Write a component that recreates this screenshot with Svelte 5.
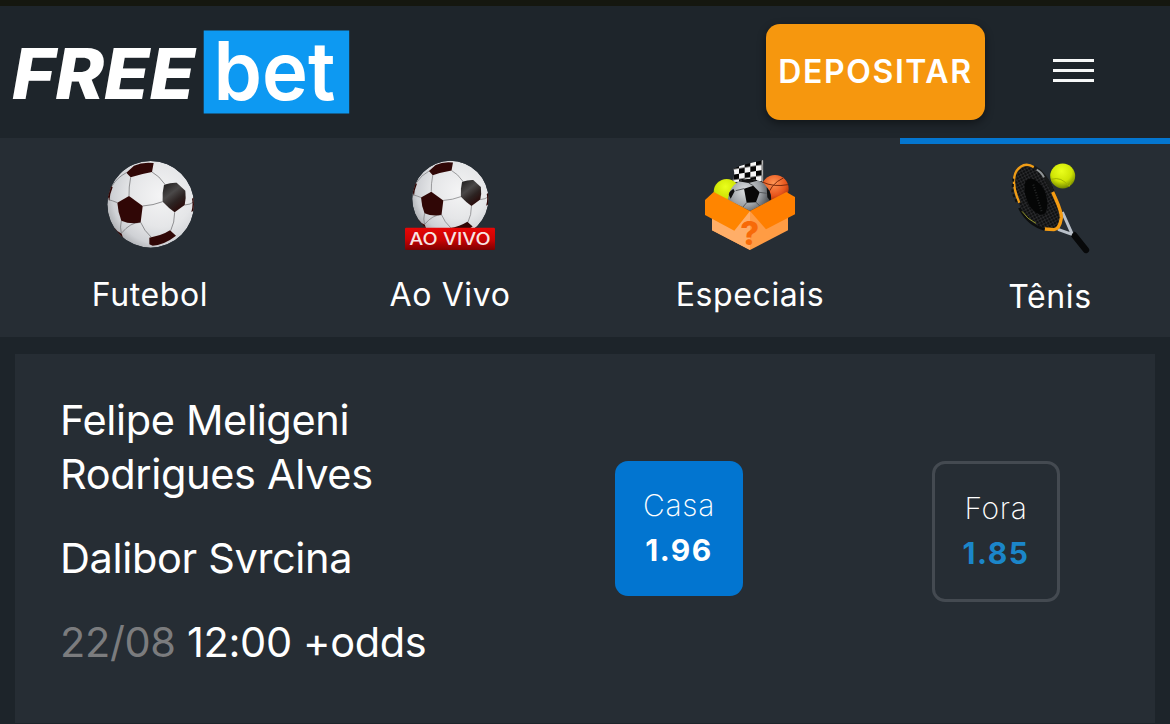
<script lang="ts">
  type Icon = 'ball' | 'live' | 'box' | 'racket';

  interface Sport {
    id: Icon;
    label: string;
  }

  const sports: Sport[] = [
    { id: 'ball', label: 'Futebol' },
    { id: 'live', label: 'Ao Vivo' },
    { id: 'box', label: 'Especiais' },
    { id: 'racket', label: 'Tênis' }
  ];

  const odds = [
    { label: 'Casa', value: '1.96' },
    { label: 'Fora', value: '1.85' }
  ];

  let active = $state<Icon>('racket');
  let picked = $state('Casa');
</script>

{#snippet ball()}
  <g clip-path="url(#ball-clip)">
    <circle cx="212" cy="163" r="130" fill="url(#ball-fill)" />
    <g fill="none" stroke="#7d7d80" stroke-width="2.500">
      <path d="M152 82Q146 112 147 138M216 66Q238 78 254 102M188 168Q220 166 248 155M182 217Q192 242 214 262" />
      <path d="M82 148Q98 152 112 158M124 212Q119 232 124 250M314 165Q332 164 342 155M284 187Q284 218 272 242" />
      <path d="M139 68Q112 82 96 108M182 217Q152 216 124 250" />
    </g>
    <g fill="#300706">
      <path d="M139 68L162 47Q188 35 221 39L216 66Q182 72 152 82Z" />
      <path d="M112 158L147 138L188 168L182 217Q152 224 124 212Q114 188 112 158Z" />
      <path d="M208 263Q245 257 270 241L288 257Q254 284 218 287L208 283Z" />
      <path d="M82 136L92 106L98 112Q90 130 88 152ZM96 232L104 234Q112 246 125 251L130 266Z" />
      <path d="M336 146L344 140V180L334 186Q340 166 336 146Z" />
    </g>
    <path d="M252 104Q274 97 290 98L316 122Q319 145 314 165L284 187Q266 174 248 155Q246 128 252 104Z" fill="url(#patch)" />
  </g>
{/snippet}

<svg class="defs" width="0" height="0" aria-hidden="true">
  <defs>
    <radialGradient id="ball-fill" cx="0.62" cy="0.4" r="0.66">
      <stop offset="0" stop-color="#f4f4f5" />
      <stop offset="0.55" stop-color="#e5e6e8" />
      <stop offset="0.85" stop-color="#cfd1d5" />
      <stop offset="1" stop-color="#aeb0b4" />
    </radialGradient>
    <linearGradient id="patch" x1="0.2" y1="0.1" x2="0.75" y2="1">
      <stop offset="0" stop-color="#2c2a2a" />
      <stop offset="0.3" stop-color="#4a4848" />
      <stop offset="0.6" stop-color="#2c2322" />
      <stop offset="1" stop-color="#2a0504" />
    </linearGradient>
    <linearGradient id="live-red" x2="0" y2="1">
      <stop offset="0" stop-color="#e80606" />
      <stop offset="0.55" stop-color="#c90303" />
      <stop offset="1" stop-color="#7d0000" />
    </linearGradient>
    <radialGradient id="tennis" cx="0.45" cy="0.3" r="0.7">
      <stop offset="0" stop-color="#eaff1c" />
      <stop offset="0.6" stop-color="#cfe405" />
      <stop offset="1" stop-color="#718500" />
    </radialGradient>
    <radialGradient id="basket" cx="0.45" cy="0.3" r="0.75">
      <stop offset="0" stop-color="#ff9554" />
      <stop offset="0.6" stop-color="#e8551c" />
      <stop offset="1" stop-color="#8e2706" />
    </radialGradient>
    <radialGradient id="grey-ball" cx="0.4" cy="0.3" r="0.7">
      <stop offset="0" stop-color="#dfe2e4" />
      <stop offset="0.5" stop-color="#9da1a5" />
      <stop offset="1" stop-color="#25282b" />
    </radialGradient>
    <clipPath id="ball-clip"><circle cx="212" cy="163" r="130" /></clipPath>
    <clipPath id="flag-clip"><path d="M190 56Q222 42 279 31V94L184 96Q198 76 190 56Z" /></clipPath>
    <clipPath id="small-clip"><path d="M174 148A65 62 0 0 1 304 148L296 155L240 183L178 152Z" /></clipPath>
    <pattern id="check" x="190" y="38" width="34" height="32" patternUnits="userSpaceOnUse" patternTransform="skewY(-9) translate(0 34)">
      <rect width="34" height="32" fill="#f6f6f6" />
      <path d="M0 0H17V16H0ZM17 16H34V32H17Z" fill="#050505" />
    </pattern>
    <pattern id="strings" width="9" height="9" patternUnits="userSpaceOnUse" patternTransform="rotate(-28)">
      <rect width="9" height="9" fill="#0e0f10" />
      <path d="M0 0H9M0 0V9" stroke="#4a4c4d" stroke-width="2" />
    </pattern>
  </defs>
</svg>

<div class="page">
  <header>
    <a class="logo" href="#home" aria-label="FREE bet">
      <svg width="340" height="86" viewBox="10 29 340 86">
        <rect x="203.700" y="30.500" width="145.500" height="83" fill="#0d99f2" />
        <text class="free" x="12" y="98.500" textLength="183" lengthAdjust="spacingAndGlyphs">FREE</text>
        <text class="bet" x="213.500" y="100" textLength="122" lengthAdjust="spacingAndGlyphs">bet</text>
      </svg>
    </a>
    <button class="deposit">DEPOSITAR</button>
    <button class="menu" aria-label="Menu">
      <span></span>
      <span></span>
      <span></span>
    </button>
  </header>

  <nav>
    {#each sports as sport (sport.id)}
      <button class="sport" class:active={active === sport.id} onclick={() => (active = sport.id)}>
        {#if sport.id === 'ball'}
          <svg viewBox="75 30 270 270">{@render ball()}</svg>
        {:else if sport.id === 'live'}
          <svg viewBox="75 30 270 270">
            <g transform="translate(24.500 3.500) scale(0.88)">{@render ball()}</g>
            <rect x="75" y="233" width="270" height="67" rx="4" fill="url(#live-red)" />
            <text class="live" x="88" y="286" textLength="244" lengthAdjust="spacingAndGlyphs">AO VIVO</text>
          </svg>
        {:else if sport.id === 'box'}
          <svg viewBox="105 30 270 270">
            <path d="M131 128L240 183L352 128L330 100H150Z" fill="#111" />
            <rect x="180" y="28" width="100" height="70" fill="url(#check)" clip-path="url(#flag-clip)" />
            <path d="M278 31V96" stroke="#aaa" stroke-width="3" />
            <circle cx="170" cy="126" r="39" fill="url(#tennis)" />
            <circle cx="315" cy="116" r="41" fill="url(#basket)" />
            <path d="M277 96Q310 112 354 104M340 84Q300 102 290 146" fill="none" stroke="#7b2a0c" stroke-width="3" />
            <g clip-path="url(#small-clip)">
              <circle cx="239" cy="148" r="65" fill="url(#grey-ball)" />
              <path d="M222 116L250 107L269 127L258 157L230 158Z" fill="#080808" />
              <path d="M205 94L222 84H258L262 92L236 99ZM174 130L190 116L194 124L182 146ZM290 112L306 130V160L292 142ZM204 168L218 172L230 192H190Z" fill="#111" />
              <path d="M236 99L250 107M197 122L222 116M230 158L218 172M258 157L272 170M269 127L290 130" stroke="#55585b" stroke-width="3" />
            </g>
            <path d="M126 190L240 184L354 190V241L240 300L126 241Z" fill="#ff9c44" />
            <path d="M240 184V300L126 241V190Z" fill="#ffae68" />
            <path d="M131 126L240 183L193 242L105 195V150Z" fill="#ff8500" />
            <path d="M349 126L240 183L288 238L375 193V141Z" fill="#ff7f00" />
            <text class="question" x="239" y="284">?</text>
          </svg>
        {:else}
          <svg viewBox="45 42 270 270">
            <path d="M252 255L288 300" stroke="#08090a" stroke-width="19" stroke-linecap="round" />
            <path d="M217 186L246 251M204 238L246 253" stroke="#b9c0c9" stroke-width="9" fill="none" />
            <path d="M74 92C68 60 92 42 126 49C158 56 190 100 203 150C212 190 214 238 196 240C156 244 118 214 94 178C80 154 76 124 74 92Z" fill="url(#strings)" />
            <path d="M104 106C106 82 128 80 148 100C170 122 178 164 168 186C158 206 126 186 114 158C106 140 102 124 104 106Z" fill="#050606" />
            <path d="M88 158C70 118 62 70 92 50C104 42 120 44 132 52" fill="none" stroke="#ef9c16" stroke-width="7" />
            <path d="M132 51C160 66 178 98 188 126" fill="none" stroke="#181a1a" stroke-width="10" />
            <path d="M140 59Q154 66 162 82" fill="none" stroke="#8f9496" stroke-width="6" />
            <path d="M188 126C202 158 216 184 214 204C211 224 204 238 192 239L164 237" fill="none" stroke="#f59c12" stroke-width="10" />
            <path d="M88 174C106 208 132 230 164 238" fill="none" stroke="#0c0e0e" stroke-width="8" />
            <path d="M96 184Q112 208 138 220" fill="none" stroke="#919329" stroke-width="3" />
            <path d="M70 86L67 128L80 156" fill="none" stroke="#101212" stroke-width="6" stroke-dasharray="9 7" />
            <path d="M130 104L156 188" stroke="#242626" stroke-width="6" stroke-dasharray="3 5" />
            <circle cx="218" cy="78" r="37.500" fill="url(#tennis)" />
            <path d="M184 88Q214 78 238 110M253 87Q240 94 238 108" fill="none" stroke="#a3b500" stroke-width="3" />
          </svg>
        {/if}
        <span>{sport.label}</span>
      </button>
    {/each}
  </nav>

  <main>
    <article class="match">
      <div class="info">
        <p>Felipe Meligeni Rodrigues Alves</p>
        <p>Dalibor Svrcina</p>
        <p class="when"><time>22/08</time> 12:00 +odds</p>
      </div>
      <div class="odds">
        {#each odds as odd (odd.label)}
          <button class="odd" class:picked={picked === odd.label} onclick={() => (picked = odd.label)}>
            <span>{odd.label}</span>
            <strong>{odd.value}</strong>
          </button>
        {/each}
      </div>
    </article>
  </main>
</div>

<style>
  :global(body) {
    background: #1d242a;
  }
  .defs {
    position: absolute;
  }
  .page {
    height: 724px;
    overflow: hidden;
    box-sizing: border-box;
    border-top: 6px solid #15170f;
    background: #1d242a;
    color: #fff;
    font-family: Inter, 'Liberation Sans', sans-serif;
  }
  button {
    border: none;
    padding: 0;
    color: inherit;
    font: inherit;
    background: none;
  }
  header {
    display: flex;
    align-items: center;
    height: 132px;
    padding: 0 76px 0 10px;
    box-sizing: border-box;
    background: #1e252b;
  }
  .logo {
    display: flex;
    margin-right: auto;
  }
  .logo svg,
  .sport svg {
    overflow: visible;
  }
  .free,
  .bet {
    fill: #fff;
    font-family: Inter, sans-serif;
  }
  .free {
    font-size: 70px;
    font-style: italic;
    font-weight: 800;
  }
  .bet {
    font-size: 81px;
    font-weight: 600;
  }
  .deposit {
    width: 219px;
    height: 96px;
    padding-bottom: 2px;
    border-radius: 14px;
    background: #f6970e;
    box-shadow: 0 3px 9px rgba(0, 0, 0, 0.45);
    font-size: 32px;
    font-weight: 600;
    letter-spacing: 1.6px;
  }
  .menu {
    display: flex;
    flex-direction: column;
    gap: 7px;
    width: 41px;
    margin: 0 0 4px 68px;
  }
  .menu span {
    height: 3px;
    background: #f6f8f8;
  }
  nav {
    display: flex;
    height: 199px;
    overflow: hidden;
    background: #262d34;
  }
  .sport {
    flex: 0 0 300px;
    display: flex;
    flex-direction: column;
    align-items: center;
    gap: 25px;
    box-sizing: border-box;
    padding-top: 22px;
    font-size: 32px;
    line-height: 40px;
    letter-spacing: 0.6px;
  }
  .sport.active {
    gap: 23px;
    border-top: 6px solid #0476d0;
    padding-top: 20px;
  }
  .sport svg {
    width: 90px;
    height: 90px;
  }
  .live {
    fill: #f7e4e4;
    font-size: 50px;
    font-weight: 500;
    letter-spacing: 0;
  }
  .question {
    fill: #f76a08;
    font-size: 98px;
    font-weight: 800;
    letter-spacing: 0;
    text-anchor: middle;
  }
  main {
    padding: 17px 15px 0;
  }
  .match {
    display: flex;
    height: 369px;
    box-sizing: border-box;
    padding: 39px 95px 0 45px;
    background: #262d34;
  }
  .info {
    width: 400px;
    font-size: 41.500px;
    line-height: 54px;
    letter-spacing: -0.35px;
  }
  .info p {
    margin: 0 0 30px;
    width: 340px;
  }
  .info .when {
    width: auto;
    white-space: nowrap;
  }
  time {
    color: #7b7c7e;
  }
  .odds {
    flex: 1;
    display: flex;
    justify-content: space-between;
    align-items: flex-start;
    margin: 68px 0 0 155px;
  }
  .odd {
    display: flex;
    flex-direction: column;
    width: 128px;
    box-sizing: border-box;
    border: 3px solid #444a51;
    border-radius: 13px;
    padding: 22px 0 23px;
    font-size: 30px;
    font-weight: 200;
    line-height: 45px;
    letter-spacing: 0.7px;
    text-align: center;
  }
  .odd strong {
    color: #1b86c9;
    font-weight: 700;
    letter-spacing: 1.5px;
  }
  .odd.picked {
    border: none;
    background: #0275d0;
  }
  .odd.picked strong {
    color: #fff;
  }
</style>
